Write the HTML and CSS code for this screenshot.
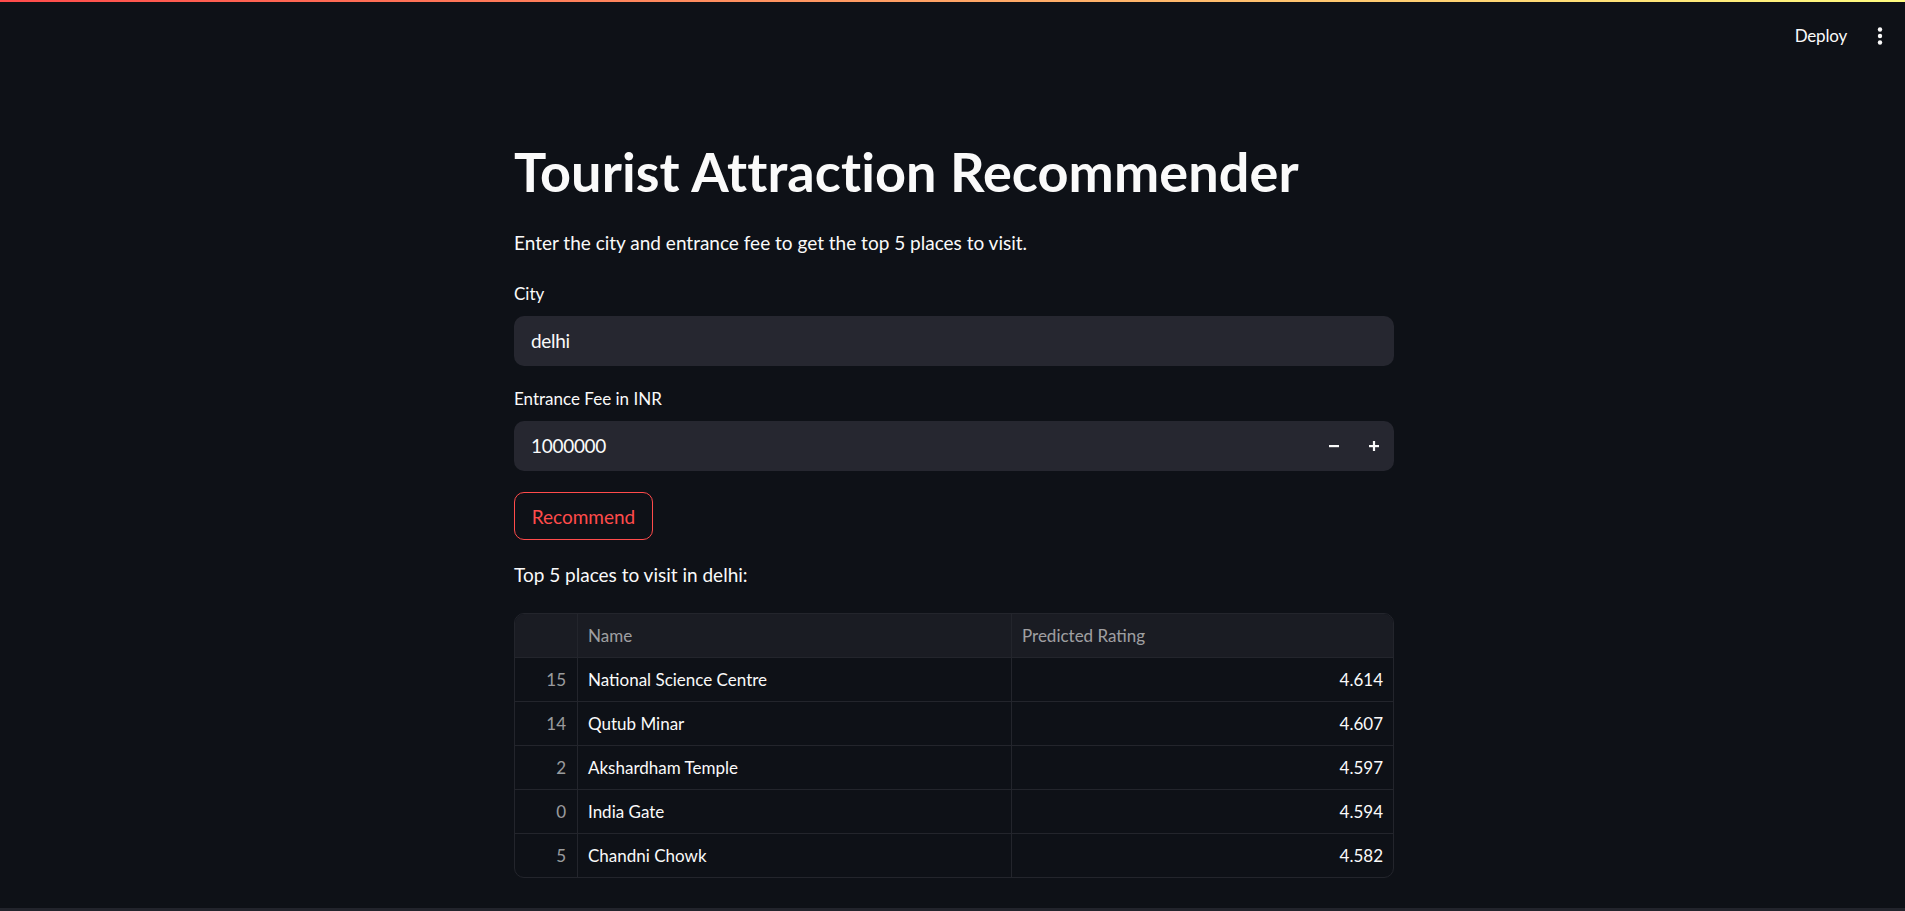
FILE: index.html
```html
<!DOCTYPE html>
<html lang="en">
<head>
<meta charset="utf-8">
<title>Tourist Attraction Recommender</title>
<link rel="stylesheet" href="styles.css">
</head>
<body>
<div class="decoration"></div>
<header class="topbar">
  <span class="deploy">Deploy</span>
  <span class="menu">
    <svg width="6" height="18" viewBox="0 0 6 18"><circle cx="3" cy="2.5" r="2.2" fill="#fafafa"/><circle cx="3" cy="9" r="2.2" fill="#fafafa"/><circle cx="3" cy="15.5" r="2.2" fill="#fafafa"/></svg>
  </span>
</header>
<main class="main">
  <h1 class="title">Tourist Attraction Recommender</h1>
  <p class="intro">Enter the city and entrance fee to get the top 5 places to visit.</p>

  <div class="field field-city">
    <label class="label">City</label>
    <div class="input"><span class="value">delhi</span></div>
  </div>

  <div class="field field-fee">
    <label class="label">Entrance Fee in INR</label>
    <div class="input number">
      <span class="value">1000000</span>
      <span class="steps">
        <span class="step"><svg width="10" height="10" viewBox="0 0 10 10"><rect x="0" y="4" width="10" height="2.2" fill="#fafafa"/></svg></span>
        <span class="step"><svg width="10" height="10" viewBox="0 0 10 10"><rect x="0" y="4" width="10" height="2.2" fill="#fafafa"/><rect x="3.9" y="0" width="2.2" height="10" fill="#fafafa"/></svg></span>
      </span>
    </div>
  </div>

  <button class="btn">Recommend</button>

  <p class="result">Top 5 places to visit in delhi:</p>

  <div class="table">
    <div class="row head">
      <div class="cell idx"></div>
      <div class="cell">Name</div>
      <div class="cell">Predicted Rating</div>
    </div>
    <div class="row">
      <div class="cell idx">15</div>
      <div class="cell">National Science Centre</div>
      <div class="cell num">4.614</div>
    </div>
    <div class="row">
      <div class="cell idx">14</div>
      <div class="cell">Qutub Minar</div>
      <div class="cell num">4.607</div>
    </div>
    <div class="row">
      <div class="cell idx">2</div>
      <div class="cell">Akshardham Temple</div>
      <div class="cell num">4.597</div>
    </div>
    <div class="row">
      <div class="cell idx">0</div>
      <div class="cell">India Gate</div>
      <div class="cell num">4.594</div>
    </div>
    <div class="row last">
      <div class="cell idx">5</div>
      <div class="cell">Chandni Chowk</div>
      <div class="cell num">4.582</div>
    </div>
  </div>
</main>
<div class="bottom-band"></div>
</body>
</html>
```

FILE: styles.css
```css
* { box-sizing: border-box; }
html, body {
  margin: 0;
  padding: 0;
  background: #0e1117;
  color: #fafafa;
  font-family: "Lato", "Noto Sans", sans-serif;
  height: 911px;
  overflow: hidden;
}
body { display: flex; flex-direction: column; }

.decoration {
  height: 2px;
  background: linear-gradient(90deg, #ff4b4b, #fffd80);
}
.topbar {
  height: 68px;
  display: flex;
  justify-content: flex-end;
  align-items: center;
  padding-right: 22px;
  gap: 30px;
}
.deploy {
  font-size: 17px;
  letter-spacing: -0.2px;
  margin-top: -2px;
}
.menu { display: flex; align-items: center; margin-top: -1px; }

.main {
  width: 883px;
  padding-left: 3px;
  margin: 0 auto;
  display: flex;
  flex-direction: column;
  align-items: flex-start;
  flex: 1;
}
.title {
  margin: 69px 0 0;
  font-size: 54px;
  line-height: 66px;
  font-weight: 700;
  letter-spacing: 0.1px;
}
.intro {
  margin: 22px 0 0;
  font-size: 19px;
  line-height: 32px;
}
.field { width: 100%; display: flex; flex-direction: column; }
.field-city { margin-top: 21px; }
.field-fee { margin-top: 19px; }
.label {
  font-size: 17px;
  line-height: 28px;
  margin-bottom: 8px;
}
.input {
  height: 50px;
  background: #262730;
  border-radius: 10px;
  display: flex;
  align-items: center;
  padding-left: 17px;
  padding-bottom: 2px;
  font-size: 19px;
  letter-spacing: -0.3px;
}
.number { justify-content: space-between; padding-right: 0; padding-bottom: 0; }
.number .value { padding-bottom: 1px; }
.steps { display: flex; height: 100%; }
.step {
  width: 40px;
  height: 100%;
  display: flex;
  align-items: center;
  justify-content: center;
}

.btn {
  margin-top: 21px;
  height: 48px;
  width: 139px;
  background: transparent;
  border: 1px solid #ff4b4b;
  border-radius: 10px;
  color: #ff4b4b;
  font-family: inherit;
  font-size: 19px;
  padding: 0;
}
.result {
  margin: 19px 0 0;
  font-size: 19px;
  line-height: 32px;
}

.table {
  margin-top: 22px;
  width: 100%;
  border: 1px solid #23252c;
  border-radius: 10px;
  overflow: hidden;
  font-size: 17px;
}
.row {
  display: grid;
  grid-template-columns: 63px 434px 1fr;
  height: 44px;
  border-bottom: 1px solid #23252c;
}
.row.last { border-bottom: none; height: 43px; }
.row.head { background: #1a1c23; color: rgba(250,250,250,0.6); height: 44px; }
.cell {
  display: flex;
  align-items: center;
  padding: 0 10px;
  border-right: 1px solid #23252c;
}
.cell:last-child { border-right: none; }
.idx {
  justify-content: flex-end;
  color: rgba(250,250,250,0.6);
  padding-right: 11px;
}
.num { justify-content: flex-end; }

.bottom-band {
  height: 3px;
  background: #22242c;
}
```
